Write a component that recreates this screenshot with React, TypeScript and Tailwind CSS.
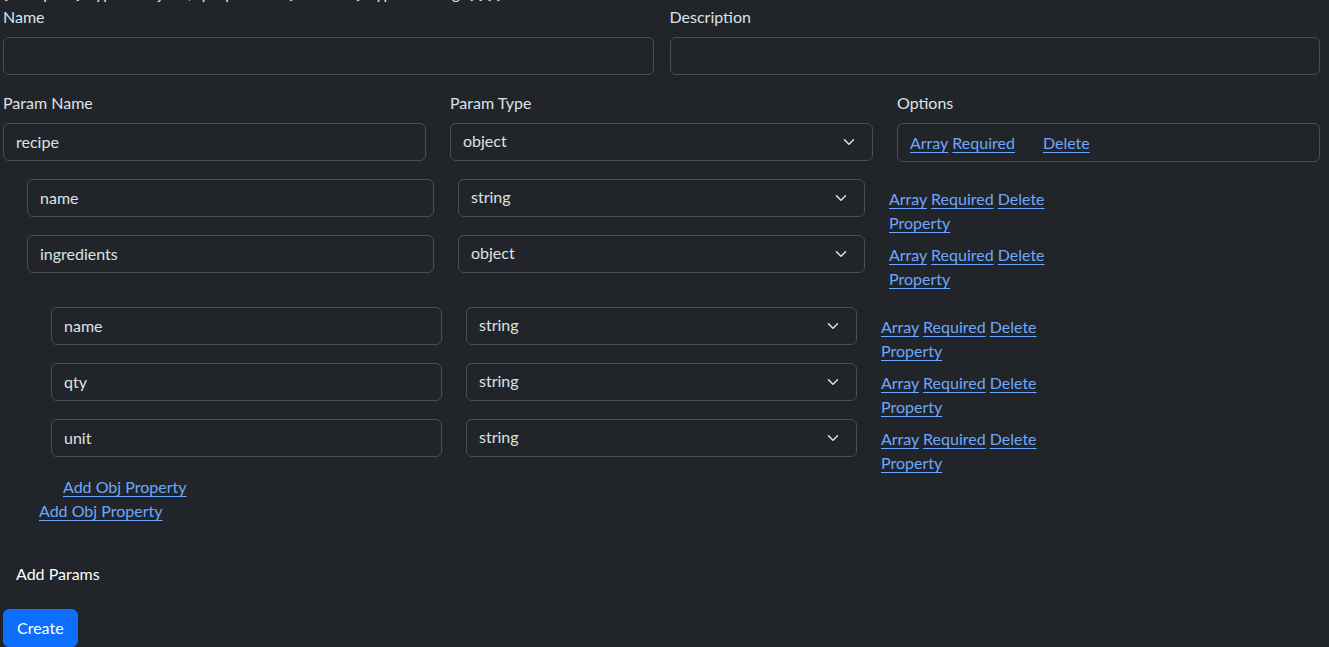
import React from 'react';

type Prop = { name: string; type: string };

const Chevron: React.FC = () => (
  <svg
    className="pointer-events-none absolute right-[16px] top-1/2 -translate-y-1/2"
    width="16"
    height="12"
    viewBox="0 0 16 16"
    fill="none"
    stroke="#dee2e6"
    strokeWidth="2"
    strokeLinecap="round"
    strokeLinejoin="round"
  >
    <path d="m2 5 6 6 6-6" />
  </svg>
);

const TextInput: React.FC<{ value?: string; className?: string }> = ({ value = '', className = '' }) => (
  <input
    defaultValue={value}
    className={`h-[38px] rounded-[6px] border border-[#495057] bg-[#212529] px-3 pb-[2px] text-[16px] text-[#dee2e6] outline-none ${className}`}
  />
);

const TypeSelect: React.FC<{ value: string; className?: string }> = ({ value, className = '' }) => (
  <div className={`relative ${className}`}>
    <select
      defaultValue={value}
      className="h-[38px] w-full appearance-none rounded-[6px] border border-[#495057] bg-[#212529] px-3 pb-[2px] text-[16px] text-[#dee2e6] outline-none"
    >
      <option value="string">string</option>
      <option value="number">number</option>
      <option value="boolean">boolean</option>
      <option value="object">object</option>
    </select>
    <Chevron />
  </div>
);

const Link: React.FC<{ children: React.ReactNode }> = ({ children }) => (
  <a href="#" className="text-[#6ea8fe] underline underline-offset-[3px]">
    {children}
  </a>
);

const PropLinks: React.FC<{ width: string }> = ({ width }) => (
  <div className={`pt-2 leading-6 ${width}`}>
    <div>
      <Link>Array</Link> <Link>Required</Link> <Link>Delete</Link>
    </div>
    <div>
      <Link>Property</Link>
    </div>
  </div>
);

const PropRow: React.FC<{ prop: Prop; inputW: string; linksW: string }> = ({ prop, inputW, linksW }) => (
  <div className="flex items-start gap-6">
    <TextInput value={prop.name} className={inputW} />
    <TypeSelect value={prop.type} className={inputW} />
    <PropLinks width={linksW} />
  </div>
);

const Label: React.FC<{ children: React.ReactNode }> = ({ children }) => (
  <label className="mb-2 block leading-6 text-[#dee2e6]">{children}</label>
);

const App: React.FC = () => {
  const ingredients: Prop[] = [
    { name: 'name', type: 'string' },
    { name: 'qty', type: 'string' },
    { name: 'unit', type: 'string' },
  ];

  return (
    <div className="min-h-screen bg-[#212529] pl-[3px] pr-[9px] text-[16px] text-[#dee2e6] font-['Lato','Liberation_Sans',sans-serif]">
      {/* clipped line above the fold */}
      <div className="h-[5px] overflow-hidden">
        <div className="-mt-[19px] leading-6 whitespace-nowrap">
          {'{ "recipe": { "type": "object", "properties": { "name": { "type": "string" } } } }'}
        </div>
      </div>

      <div className="grid grid-cols-2 gap-4">
        <div>
          <Label>Name</Label>
          <TextInput className="w-full" />
        </div>
        <div>
          <Label>Description</Label>
          <TextInput className="w-full" />
        </div>
      </div>

      <div className="mt-4 grid grid-cols-3 gap-6">
        <div>
          <Label>Param Name</Label>
          <TextInput value="recipe" className="w-full" />
        </div>
        <div>
          <Label>Param Type</Label>
          <TypeSelect value="object" />
        </div>
        <div>
          <Label>Options</Label>
          <div className="flex h-[39px] items-center rounded-[6px] border border-[#495057] px-3 pt-[1px] leading-6">
            <Link>Array</Link>
            <span className="ml-1">
              <Link>Required</Link>
            </span>
            <span className="ml-[28px]">
              <Link>Delete</Link>
            </span>
          </div>
        </div>
      </div>

      {/* object properties */}
      <div className="ml-6 mt-[17px]">
        <PropRow prop={{ name: 'name', type: 'string' }} inputW="w-[407px]" linksW="w-[191px]" />
        <PropRow prop={{ name: 'ingredients', type: 'object' }} inputW="w-[407px]" linksW="w-[191px]" />

        <div className="ml-6 mt-4">
          {ingredients.map((p) => (
            <PropRow key={p.name} prop={p} inputW="w-[391px]" linksW="w-[183px]" />
          ))}
          <div className="pl-3 leading-6">
            <Link>Add Obj Property</Link>
          </div>
        </div>
        <div className="pl-3 leading-6">
          <Link>Add Obj Property</Link>
        </div>
      </div>

      <button className="mt-8 block h-[38px] rounded-[6px] border border-transparent px-3 leading-6 text-white">
        Add Params
      </button>

      <button className="mt-4 block h-[38px] rounded-[6px] border border-[#0d6efd] bg-[#0d6efd] px-[13px] leading-6 text-white">
        Create
      </button>
    </div>
  );
};

export default App;
